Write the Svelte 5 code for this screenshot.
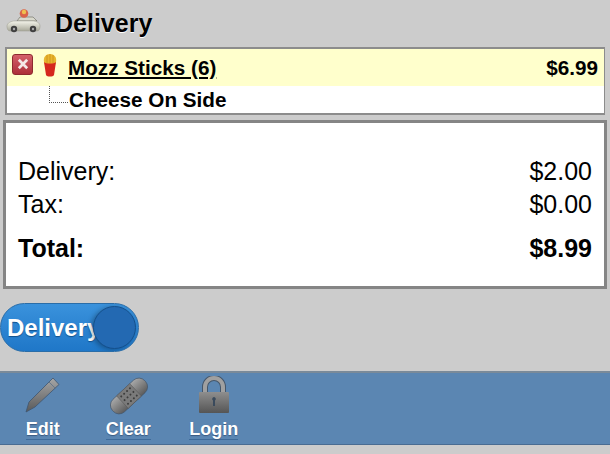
<script>
  const totals = [
    { label: 'Delivery:', value: '$2.00' },
    { label: 'Tax:', value: '$0.00' }
  ];
</script>

<div class="page">
  <header class="head">
    <svg class="car" viewBox="0 0 44 34" width="44" height="34">
      <defs>
        <linearGradient id="carBody" x1="0" y1="0" x2="0" y2="1">
          <stop offset="0" stop-color="#f4f4ea" />
          <stop offset="1" stop-color="#a9a99a" />
        </linearGradient>
      </defs>
      <path d="M12 17l3-4h13l4 4z" fill="#d8d8cc" stroke="#77776c" stroke-width="0.7" />
      <circle cx="19" cy="9.5" r="4.3" fill="#d9634a" />
      <circle cx="19" cy="8" r="2.2" fill="#efc04e" />
      <path d="M2 22c0-3 4-5 8-5h17c5 0 8 2 8 5 0 3-1 5-3 5H5c-2 0-3-2-3-5z" fill="url(#carBody)" stroke="#9a9a8c" stroke-width="0.5" />
      <circle cx="9" cy="25" r="3.2" fill="#3f3f3f" />
      <circle cx="9" cy="25" r="1.2" fill="#aaa" />
      <circle cx="28" cy="25" r="3.2" fill="#3f3f3f" />
      <circle cx="28" cy="25" r="1.2" fill="#aaa" />
    </svg>
    <h1>Delivery</h1>
  </header>

  <section class="order">
    <div class="item">
      <span class="remove">
        <svg viewBox="0 0 20 20" width="12" height="12">
          <path d="M3 3l14 14M17 3L3 17" stroke="#f5e8e8" stroke-width="4.5" fill="none" />
        </svg>
      </span>
      <svg class="fries" viewBox="0 0 14 24" width="14" height="24">
        <path d="M1 9C0 4 3 1 7 1s7 3 6 8l-1 3H2z" fill="#e8b52e" />
        <path d="M4 2v8M7 1v9M10 2v8" stroke="#c98f1c" stroke-width="0.8" />
        <path d="M1 9c2 2 10 2 12 0l-2 13c-1 2-7 2-8 0z" fill="#d5271e" />
      </svg>
      <span class="name">Mozz Sticks (6)</span>
      <span class="price">$6.99</span>
    </div>
    <div class="mod">
      <span class="branch"></span>
      <span>Cheese On Side</span>
    </div>
  </section>

  <section class="summary">
    {#each totals as row}
      <div class="row">
        <span>{row.label}</span>
        <span>{row.value}</span>
      </div>
    {/each}
    <div class="row total">
      <span>Total:</span>
      <span>$8.99</span>
    </div>
  </section>

  <div class="toggle">
    <span>Delivery</span>
    <i class="knob"></i>
  </div>

  <nav class="bar">
    <div class="tool">
      <svg viewBox="0 0 42 40" width="42" height="40">
        <defs>
          <linearGradient id="metal" x1="0" y1="0" x2="0" y2="1">
            <stop offset="0" stop-color="#a6a6a6" />
            <stop offset="1" stop-color="#595959" />
          </linearGradient>
        </defs>
        <path d="M31 2l6 6.500L13 31 4 36l3-10z" fill="url(#metal)" stroke="#3f5570" stroke-width="0.8" />
        <path d="M27 6l6.500 6.500" stroke="#66788c" stroke-width="1" fill="none" />
      </svg>
      <span>Edit</span>
    </div>
    <div class="tool">
      <svg viewBox="0 0 42 40" width="42" height="40">
        <defs>
          <linearGradient id="metal2" x1="0" y1="0" x2="0" y2="1">
            <stop offset="0" stop-color="#a8a8a8" />
            <stop offset="1" stop-color="#5c5c5c" />
          </linearGradient>
        </defs>
        <g transform="rotate(-43 22 20)">
          <rect x="0" y="11.500" width="44" height="17" rx="8" fill="url(#metal2)" stroke="#44566a" stroke-width="0.7" />
          <rect x="13" y="11.500" width="18" height="17" fill="#7a7a7a" stroke="#555" stroke-width="0.5" />
          <g fill="#3d3d3d">
            <circle cx="16" cy="15" r="1" /><circle cx="20" cy="15" r="1" /><circle cx="24" cy="15" r="1" /><circle cx="28" cy="15" r="1" />
            <circle cx="16" cy="20" r="1" /><circle cx="20" cy="20" r="1" /><circle cx="24" cy="20" r="1" /><circle cx="28" cy="20" r="1" />
            <circle cx="16" cy="25" r="1" /><circle cx="20" cy="25" r="1" /><circle cx="24" cy="25" r="1" /><circle cx="28" cy="25" r="1" />
          </g>
        </g>
      </svg>
      <span>Clear</span>
    </div>
    <div class="tool">
      <svg viewBox="0 0 32 40" width="32" height="40">
        <defs>
          <linearGradient id="metal3" x1="0" y1="0" x2="0" y2="1">
            <stop offset="0" stop-color="#8e8e8e" />
            <stop offset="1" stop-color="#555" />
          </linearGradient>
        </defs>
        <path d="M7 18V11a9 9 0 0 1 18 0v7" fill="none" stroke="#44566a" stroke-width="6" />
        <path d="M7 18V11a9 9 0 0 1 18 0v7" fill="none" stroke="#a0a0a0" stroke-width="4" />
        <rect x="1" y="16" width="30" height="21" rx="1" fill="url(#metal3)" />
        <path d="M16 21a2 2 0 0 1 1 3.600V30h-2v-5.400A2 2 0 0 1 16 21z" fill="#3a4a5c" />
      </svg>
      <span>Login</span>
    </div>
  </nav>
</div>

<style>
  :global(body) {
    margin: 0;
    background: #cccccc;
  }

  .page {
    width: 610px;
    height: 454px;
    overflow: hidden;
    background: #cccccc;
    font-family: "Liberation Sans", Arial, sans-serif;
    color: #000;
    display: flex;
    flex-direction: column;
  }

  .head {
    height: 47px;
    display: flex;
    align-items: center;
    padding-left: 5px;
    box-sizing: border-box;
  }

  .car {
    margin-top: -6px;
    flex: none;
  }

  h1 {
    margin: 0 0 0 6px;
    font-size: 25px;
    font-weight: bold;
    text-shadow: 0 1px 0 #fff;
  }

  .order {
    margin: 0 5px;
    height: 68px;
    box-sizing: border-box;
    border: 2px solid #8c8c8c;
    border-right-width: 1px;
    background: #fff;
    font-weight: bold;
    font-size: 20.700px;
  }

  .item {
    height: 37px;
    background: #ffffcc;
    display: flex;
    align-items: center;
    padding: 0 6px 0 5px;
  }

  .remove {
    width: 21px;
    height: 21px;
    margin-top: -7px;
    border-radius: 3px;
    background: linear-gradient(#d4606a, #ad2f3a);
    border: 1px solid #8e2a30;
    box-sizing: border-box;
    display: flex;
    align-items: center;
    justify-content: center;
  }

  .fries {
    margin: -6px 0 0 10px;
  }

  .name {
    margin-left: 11px;
    text-decoration: underline;
  }

  .price {
    margin-left: auto;
  }

  .mod {
    height: 27px;
    display: flex;
    align-items: center;
    padding: 0 0 0 62px;
    box-sizing: border-box;
    position: relative;
  }

  .branch {
    position: absolute;
    left: 42px;
    top: 0;
    width: 19px;
    height: 17px;
    border-left: 1px dotted #555;
    border-bottom: 1px dotted #555;
    box-sizing: border-box;
  }

  .summary {
    margin: 5px 3px 0;
    height: 169px;
    box-sizing: border-box;
    border: 3px solid #858585;
    background: #fff;
    padding: 32px 12px 0 12px;
    font-size: 25px;
  }

  .row {
    display: flex;
    justify-content: space-between;
    height: 33px;
    line-height: 33px;
  }

  .total {
    margin-top: 11px;
    font-weight: bold;
  }

  .toggle {
    margin: 14px 0 0 0;
    width: 139px;
    height: 49px;
    box-sizing: border-box;
    border-radius: 25px;
    background: linear-gradient(#3a92dc, #1f77c8);
    border: 1px solid #2a6da8;
    display: flex;
    align-items: center;
    position: relative;
    overflow: hidden;
    color: #fff;
    font-weight: bold;
    font-size: 24px;
    padding-left: 6px;
    text-shadow: 0 1px 1px #12508a;
  }

  .knob {
    position: absolute;
    right: 2px;
    top: 2px;
    width: 43px;
    height: 43px;
    border-radius: 50%;
    background: #2369b2;
    border: 1px solid #15508c;
    box-sizing: border-box;
    box-shadow: -2px 1px 5px rgba(0, 0, 0, 0.3);
  }

  .bar {
    margin-top: 19px;
    height: 74px;
    box-sizing: border-box;
    background: #5b86b2;
    border-top: 2px solid #7a8a99;
    border-bottom: 1px solid #4a6c92;
    display: flex;
    padding-top: 3px;
    color: #fff;
    font-weight: bold;
    font-size: 18px;
  }

  .tool {
    width: 85.500px;
    display: flex;
    flex-direction: column;
    align-items: center;
  }

  .tool span {
    height: 19px;
    line-height: 19px;
    margin-top: 4px;
    border-bottom: 1px solid #3f6b9a;
    text-shadow: 0 1px 1px #3a5a80;
  }
</style>
